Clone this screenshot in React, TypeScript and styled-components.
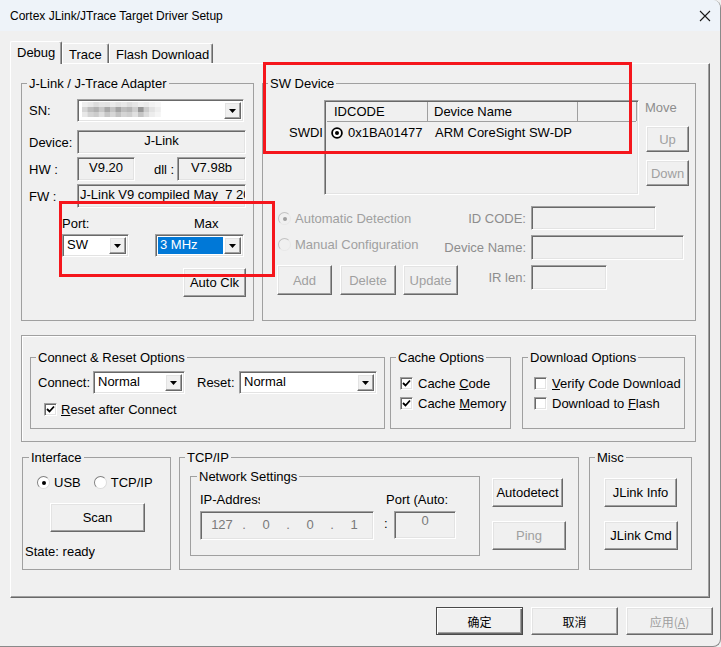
import React from "react"
import styled, { createGlobalStyle, css } from "styled-components"

const GlobalStyle = createGlobalStyle`
  * { box-sizing: border-box; }
  html, body { margin: 0; padding: 0; background: #f0f0f0; }
  body {
    font-family: "Liberation Sans", Arial, sans-serif;
    font-size: 13px;
    color: #000;
  }
`

const sunken = css`
  border: 1px solid;
  border-color: #a0a0a0 #ffffff #ffffff #a0a0a0;
  box-shadow: inset 1px 1px 0 #696969, inset -1px -1px 0 #e3e3e3;
`

const raised = css`
  border: 1px solid;
  border-color: #ffffff #696969 #696969 #ffffff;
  box-shadow: inset -1px -1px 0 #a0a0a0, inset 1px 1px 0 #e3e3e3;
`

const Window = styled.div`
  position: relative;
  width: 721px;
  height: 647px;
  background: #f0f0f0;
  border-right: 1px solid #8a8a8a;
  border-bottom: 1px solid #8a8a8a;
  border-radius: 0 8px 8px 0;
  overflow: hidden;
  display: flex;
  flex-direction: column;
`

const TitleBar = styled.div`
  height: 31px;
  flex: none;
  background: #eef3f9;
  display: flex;
  align-items: center;
  justify-content: space-between;
  padding: 0 9px 0 10px;
  font-size: 12px;
`

const Body = styled.div`
  flex: 1;
  padding: 10px 0 0 10px;
  display: flex;
  flex-direction: column;
`

const TabStrip = styled.div`
  display: flex;
  align-items: flex-end;
  height: 22px;
  position: relative;
  z-index: 1;
`

const Tab = styled.div<{ $active?: boolean; $w: number }>`
  width: ${p => p.$w}px;
  height: ${p => (p.$active ? 23 : 20)}px;
  margin-bottom: ${p => (p.$active ? -1 : 0)}px;
  background: #f0f0f0;
  border-top: 1px solid #fff;
  border-left: 1px solid #fff;
  border-right: 1px solid #696969;
  box-shadow: inset -1px 0 0 #a0a0a0;
  border-radius: 2px 2px 0 0;
  padding: 3px 0 0 6px;
  line-height: 15px;
  white-space: nowrap;
`

const Panel = styled.div`
  width: 700px;
  height: 535px;
  background: #f0f0f0;
  border-top: 1px solid #fff;
  border-left: 1px solid #fff;
  border-right: 1px solid #696969;
  border-bottom: 1px solid #696969;
  box-shadow: inset -1px -1px 0 #a0a0a0;
  padding: 12px 11px 0 10px;
  display: flex;
  flex-direction: column;
`

const Row = styled.div<{ $mt?: number; $ml?: number }>`
  display: flex;
  align-items: center;
  margin-top: ${p => p.$mt ?? 0}px;
  margin-left: ${p => p.$ml ?? 0}px;
`

const Column = styled.div<{ $mt?: number; $ml?: number; $gap?: number }>`
  display: flex;
  flex-direction: column;
  align-items: flex-start;
  margin-top: ${p => p.$mt ?? 0}px;
  margin-left: ${p => p.$ml ?? 0}px;
  gap: ${p => p.$gap ?? 0}px;
`

const Group = styled.fieldset<{ $w: number; $h: number; $ml?: number }>`
  margin: 0 0 0 ${p => p.$ml ?? 0}px;
  padding: 0;
  min-width: 0;
  width: ${p => p.$w}px;
  height: ${p => p.$h}px;
  flex: none;
  border: 1px solid #a0a0a0;
`

const Legend = styled.legend<{ $x?: number }>`
  margin-left: ${p => p.$x ?? 5}px;
  padding: 0 2px;
  line-height: 15px;
  font-size: 13px;
`

const Label = styled.span<{ $w?: number; $gray?: boolean; $right?: boolean }>`
  display: inline-block;
  flex: none;
  width: ${p => (p.$w ? `${p.$w}px` : "auto")};
  line-height: 15px;
  white-space: nowrap;
  overflow: hidden;
  color: ${p => (p.$gray ? "#8d8d8d" : "#000")};
  text-align: ${p => (p.$right ? "right" : "left")};
`

const ReadField = styled.div<{ $w: number; $h?: number; $left?: boolean }>`
  ${sunken};
  width: ${p => p.$w}px;
  height: ${p => p.$h ?? 24}px;
  flex: none;
  background: #f0f0f0;
  line-height: 20px;
  padding: ${p => (p.$left ? "0 0 0 2px" : "0 3px")};
  text-align: ${p => (p.$left ? "left" : "center")};
  white-space: nowrap;
  overflow: hidden;
`

const ComboBox = styled.div<{ $w: number }>`
  ${sunken};
  width: ${p => p.$w}px;
  height: 23px;
  flex: none;
  background: #fff;
  display: flex;
  padding: 2px;
`

const ComboText = styled.div<{ $selected?: boolean }>`
  flex: 1;
  margin-right: 1px;
  padding-left: 2px;
  line-height: 16px;
  white-space: nowrap;
  overflow: hidden;
  background: ${p => (p.$selected ? "#0078d7" : "transparent")};
  color: ${p => (p.$selected ? "#fff" : "#000")};
`

const DropButton = styled.div`
  ${raised};
  width: 17px;
  flex: none;
  background: #f0f0f0;
  display: flex;
  align-items: center;
  justify-content: center;
`

const Button = styled.button<{ $w: number; $h?: number; $off?: boolean; $default?: boolean; $cjk?: boolean }>`
  ${raised};
  width: ${p => p.$w}px;
  height: ${p => p.$h ?? 29}px;
  flex: none;
  margin: 0;
  padding: 0;
  background: #f0f0f0;
  font-family: ${p =>
    p.$cjk ? '"Noto Sans CJK SC", "Liberation Sans", sans-serif' : '"Liberation Sans", Arial, sans-serif'};
  font-size: ${p => (p.$cjk ? 12 : 13)}px;
  color: ${p => (p.$off ? "#a0a0a0" : "#000")};
  ${p =>
    p.$default &&
    css`
      border: 1px solid #4a4a4a;
      box-shadow: inset 1px 1px 0 #fff, inset -1px -1px 0 #696969, inset -2px -2px 0 #a0a0a0;
    `}
`

const CheckBox = styled.span`
  ${sunken};
  width: 13px;
  height: 13px;
  flex: none;
  background: #fff;
  display: flex;
  align-items: center;
  justify-content: center;
`

const CheckItem = styled.label<{ $gap?: number }>`
  display: flex;
  align-items: center;
  gap: ${p => p.$gap ?? 5}px;
  height: 16px;
  white-space: nowrap;
`

const RadioDot = styled.span<{ $on?: boolean; $off?: boolean }>`
  width: 13px;
  height: 13px;
  flex: none;
  border-radius: 50%;
  border: 1px solid;
  border-color: ${p => (p.$off ? "#c3c3c3 #e8e8e8 #e8e8e8 #c3c3c3" : "#808080 #dcdcdc #dcdcdc #808080")};
  background: ${p => (p.$off ? "#f0f0f0" : "#fff")};
  display: flex;
  align-items: center;
  justify-content: center;
  &::after {
    content: "";
    width: 4px;
    height: 4px;
    border-radius: 50%;
    background: ${p => (p.$off ? "#a0a0a0" : "#000")};
    display: ${p => (p.$on ? "block" : "none")};
  }
`

const RadioItem = styled.label<{ $off?: boolean }>`
  display: flex;
  align-items: center;
  gap: 4px;
  white-space: nowrap;
  color: ${p => (p.$off ? "#a0a0a0" : "#000")};
`

/* top area */

const TopRow = styled.div`
  display: flex;
  gap: 8px;
  height: 245px;
`

const AdapterBody = styled.div`
  display: flex;
  flex-direction: column;
  padding: 8px 7px 0 7px;
`

const SwBody = styled.div`
  display: flex;
  flex-direction: column;
  padding-top: 9px;
`

const SwdLabel = styled.span`
  margin: 25px 0 0 26px;
  width: 34px;
  flex: none;
  overflow: hidden;
  white-space: nowrap;
  line-height: 15px;
`

const ListView = styled.div`
  ${sunken};
  margin-left: 1px;
  width: 315px;
  height: 95px;
  flex: none;
  background: #f0f0f0;
  padding: 1px 2px 0 2px;
  overflow: hidden;
`

const ListHeader = styled.div`
  display: flex;
  height: 20px;
  border-bottom: 1px solid #a0a0a0;
`

const HeaderCell = styled.div<{ $w: number; $pl?: number }>`
  width: ${p => p.$w}px;
  flex: none;
  border-right: 1px solid #a0a0a0;
  padding-left: ${p => p.$pl ?? 6}px;
  line-height: 20px;
  white-space: nowrap;
`

const ListItem = styled.div`
  display: flex;
  align-items: center;
  height: 21px;
`

const ListCell = styled.div<{ $w: number; $pl?: number }>`
  width: ${p => p.$w}px;
  flex: none;
  display: flex;
  align-items: center;
  gap: 5px;
  padding-left: ${p => p.$pl ?? 6}px;
  white-space: nowrap;
`

const DetectGrid = styled.div`
  display: grid;
  grid-template-columns: 167px 87px auto;
  grid-template-rows: 24px 25px 30px;
  row-gap: 5px;
  margin: 11px 0 0 14px;
  align-items: start;
`

const GridLabel = styled.span`
  color: #8d8d8d;
  text-align: right;
  padding-right: 5px;
  white-space: nowrap;
  line-height: 25px;
`

const ButtonRow = styled.div<{ $gap?: number }>`
  display: flex;
  gap: ${p => p.$gap ?? 8}px;
`

/* options */

const OptionsFrame = styled.div`
  margin-top: 14px;
  width: 675px;
  height: 107px;
  flex: none;
  border: 1px solid #a0a0a0;
  box-shadow: inset 1px 1px 0 #fff;
  padding: 14px 0 0 8px;
  display: flex;
  align-items: flex-start;
`

const GroupInner = styled.div<{ $pt?: number; $pl?: number; $gap?: number }>`
  display: flex;
  flex-direction: column;
  align-items: flex-start;
  gap: ${p => p.$gap ?? 0}px;
  padding: ${p => p.$pt ?? 0}px 0 0 ${p => p.$pl ?? 0}px;
`

const BottomRow = styled.div`
  margin: 8px 0 0 1px;
  display: flex;
  align-items: flex-start;
`

const IpField = styled.div`
  ${sunken};
  width: 174px;
  height: 29px;
  flex: none;
  background: #f0f0f0;
  color: #7a7a7a;
  display: flex;
  align-items: center;
  padding: 0 0 2px 3px;
`

const Octet = styled.span<{ $w: number }>`
  width: ${p => p.$w}px;
  text-align: center;
`

const Footer = styled.div`
  display: flex;
  justify-content: flex-end;
  gap: 8px;
  margin-top: 9px;
  padding-right: 7px;
`

const Annotation = styled.div<{ $x: number; $y: number; $w: number; $h: number }>`
  position: absolute;
  left: ${p => p.$x}px;
  top: ${p => p.$y}px;
  width: ${p => p.$w}px;
  height: ${p => p.$h}px;
  border: 3px solid #f5161c;
  pointer-events: none;
`

const Arrow = () => (
  <svg width="7" height="4" viewBox="0 0 7 4">
    <path d="M0 0h7L3.5 4z" fill="#000" />
  </svg>
)

const Combo: React.FC<{ w: number; value?: React.ReactNode; selected?: boolean }> = ({ w, value, selected }) => (
  <ComboBox $w={w}>
    <ComboText $selected={selected}>{value}</ComboText>
    <DropButton>
      <Arrow />
    </DropButton>
  </ComboBox>
)

const Check: React.FC<{ on?: boolean; gap?: number; children: React.ReactNode }> = ({ on, gap, children }) => (
  <CheckItem $gap={gap}>
    <CheckBox>
      {on && (
        <svg width="9" height="9" viewBox="0 0 9 9">
          <path d="M1 4l2.5 2.5L8 1.5" stroke="#000" strokeWidth="1.8" fill="none" />
        </svg>
      )}
    </CheckBox>
    <span>{children}</span>
  </CheckItem>
)

const Radio: React.FC<{ on?: boolean; off?: boolean; children: React.ReactNode }> = ({ on, off, children }) => (
  <RadioItem $off={off}>
    <RadioDot $on={on} $off={off} />
    <span>{children}</span>
  </RadioItem>
)

const mosaic = [
  [238, 232, 220, 228, 226, 234, 226, 232, 222, 230, 238, 234, 242, 246],
  [214, 190, 178, 200, 168, 196, 164, 190, 182, 206, 150, 204, 226, 238],
  [232, 212, 204, 222, 198, 214, 194, 212, 206, 224, 196, 220, 236, 244],
]

const Blurred = () => (
  <svg width="80" height="15" viewBox="0 0 80 15">
    {mosaic.map((row, y) =>
      row.map((v, x) => (
        <rect key={`${x}-${y}`} x={x * 5.6} y={y * 5} width="6" height="5" fill={`rgb(${v},${v},${v})`} />
      ))
    )}
  </svg>
)

const ListMark = () => (
  <svg width="12" height="12" viewBox="0 0 12 12">
    <circle cx="6" cy="6" r="4.9" stroke="#000" strokeWidth="1.8" fill="#fff" />
    <circle cx="6" cy="6" r="2" fill="#000" />
  </svg>
)

export default function App() {
  return (
    <Window>
      <GlobalStyle />
      <TitleBar>
        <span>Cortex JLink/JTrace Target Driver Setup</span>
        <svg width="12" height="12" viewBox="0 0 12 12">
          <path d="M1 1l10 10M11 1L1 11" stroke="#1a1a1a" strokeWidth="1.1" />
        </svg>
      </TitleBar>

      <Body>
        <TabStrip>
          <Tab $active $w={52}>Debug</Tab>
          <Tab $w={47}>Trace</Tab>
          <Tab $w={104}>Flash Download</Tab>
        </TabStrip>

        <Panel>
          <TopRow>
            <Group $w={233} $h={245}>
              <Legend>J-Link / J-Trace Adapter</Legend>
              <AdapterBody>
                <Row>
                  <Label $w={48}>SN:</Label>
                  <ComboBox $w={167}>
                    <ComboText>
                      <Blurred />
                    </ComboText>
                    <DropButton>
                      <Arrow />
                    </DropButton>
                  </ComboBox>
                </Row>
                <Row $mt={8}>
                  <Label $w={48}>Device:</Label>
                  <ReadField $w={169}>J-Link</ReadField>
                </Row>
                <Row $mt={3}>
                  <Label $w={48}>HW :</Label>
                  <ReadField $w={58}>V9.20</ReadField>
                  <Label $w={23} style={{ marginLeft: 19 }}>dll :</Label>
                  <ReadField $w={69}>V7.98b</ReadField>
                </Row>
                <Row $mt={3}>
                  <Label $w={48}>FW :</Label>
                  <ReadField $w={169} $left>J-Link V9 compiled May&nbsp;&nbsp;7 2021 10:17:32</ReadField>
                </Row>
                <Row $mt={8} $ml={33}>
                  <Label $w={132}>Port:</Label>
                  <Label>Max</Label>
                </Row>
                <Row $mt={3} $ml={33}>
                  <Combo w={67} value="SW" />
                  <span style={{ width: 26 }} />
                  <Combo w={89} value="3 MHz" selected />
                </Row>
                <Row $mt={11} style={{ alignSelf: "flex-end" }}>
                  <Button $w={63}>Auto Clk</Button>
                </Row>
              </AdapterBody>
            </Group>

            <Group $w={434} $h={245}>
              <Legend>SW Device</Legend>
              <SwBody>
                <Row style={{ alignItems: "flex-start" }}>
                  <SwdLabel>SWDIO</SwdLabel>
                  <ListView>
                    <ListHeader>
                      <HeaderCell $w={101} $pl={7}>IDCODE</HeaderCell>
                      <HeaderCell $w={150}>Device Name</HeaderCell>
                      <HeaderCell $w={59} />
                    </ListHeader>
                    <ListItem>
                      <ListCell $w={101} $pl={4}>
                        <ListMark />
                        0x1BA01477
                      </ListCell>
                      <ListCell $w={150} $pl={7}>ARM CoreSight SW-DP</ListCell>
                    </ListItem>
                  </ListView>
                  <Column $ml={6}>
                    <Label $gray>Move</Label>
                    <Button $w={43} $h={26} $off style={{ marginTop: 11, marginLeft: 1 }}>Up</Button>
                    <Button $w={43} $h={26} $off style={{ marginTop: 8, marginLeft: 1 }}>Down</Button>
                  </Column>
                </Row>

                <DetectGrid>
                  <Row $ml={1} $mt={5}>
                    <Radio on off>Automatic Detection</Radio>
                  </Row>
                  <GridLabel>ID CODE:</GridLabel>
                  <ReadField $w={125} />

                  <Row $ml={1} $mt={2}>
                    <Radio off>Manual Configuration</Radio>
                  </Row>
                  <GridLabel>Device Name:</GridLabel>
                  <ReadField $w={153} $h={25} />

                  <ButtonRow>
                    <Button $w={55} $h={30} $off>Add</Button>
                    <Button $w={56} $h={30} $off>Delete</Button>
                    <Button $w={55} $h={30} $off style={{ marginLeft: -1 }}>Update</Button>
                  </ButtonRow>
                  <GridLabel>IR len:</GridLabel>
                  <ReadField $w={76} $h={25} />
                </DetectGrid>
              </SwBody>
            </Group>
          </TopRow>

          <OptionsFrame>
            <Group $w={355} $h={79}>
              <Legend>Connect &amp; Reset Options</Legend>
              <GroupInner $pt={6} $pl={7}>
                <Row>
                  <Label $w={55}>Connect:</Label>
                  <Combo w={92} value="Normal" />
                  <Label $w={42} style={{ marginLeft: 12 }}>Reset:</Label>
                  <Combo w={138} value="Normal" />
                </Row>
                <Row $mt={7} $ml={6}>
                  <Check on gap={4}>
                    <u>R</u>eset after Connect
                  </Check>
                </Row>
              </GroupInner>
            </Group>

            <Group $w={121} $h={79} $ml={5}>
              <Legend>Cache Options</Legend>
              <GroupInner $pt={10} $pl={9} $gap={4}>
                <Check on>
                  Cache <u>C</u>ode
                </Check>
                <Check on>
                  Cache <u>M</u>emory
                </Check>
              </GroupInner>
            </Group>

            <Group $w={163} $h={79} $ml={11}>
              <Legend>Download Options</Legend>
              <GroupInner $pt={10} $pl={11} $gap={4}>
                <Check>
                  <u>V</u>erify Code Download
                </Check>
                <Check>
                  Download to <u>F</u>lash
                </Check>
              </GroupInner>
            </Group>
          </OptionsFrame>

          <BottomRow>
            <Group $w={149} $h={120}>
              <Legend $x={6}>Interface</Legend>
              <GroupInner $pt={10} $pl={2}>
                <Row $ml={12}>
                  <Radio on>USB</Radio>
                  <span style={{ width: 13 }} />
                  <Radio>TCP/IP</Radio>
                </Row>
                <Button $w={95} style={{ marginTop: 13, marginLeft: 25 }}>Scan</Button>
                <Label style={{ marginTop: 12 }}>State: ready</Label>
              </GroupInner>
            </Group>

            <Group $w={400} $h={120} $ml={8}>
              <Legend>TCP/IP</Legend>
              <Row style={{ alignItems: "flex-start", padding: "4px 0 0 10px" }}>
                <Group $w={290} $h={87}>
                  <Legend $x={6}>Network Settings</Legend>
                  <GroupInner $pt={8} $pl={9}>
                    <Row>
                      <Label $w={60} style={{ marginRight: 126 }}>IP-Address</Label>
                      <Label>Port (Auto:</Label>
                    </Row>
                    <Row $mt={4} style={{ alignItems: "flex-start" }}>
                      <IpField>
                        <Octet $w={36}>127</Octet>
                        <Octet $w={8}>.</Octet>
                        <Octet $w={36}>0</Octet>
                        <Octet $w={8}>.</Octet>
                        <Octet $w={36}>0</Octet>
                        <Octet $w={8}>.</Octet>
                        <Octet $w={36}>1</Octet>
                      </IpField>
                      <Label $w={20} style={{ paddingLeft: 10, lineHeight: "26px" }}>:</Label>
                      <ReadField $w={62} $h={28} style={{ color: "#7a7a7a", lineHeight: "18px" }}>0</ReadField>
                    </Row>
                  </GroupInner>
                </Group>
                <Column $ml={12} $mt={9} $gap={14}>
                  <Button $w={71}>Autodetect</Button>
                  <Button $w={74} $off>Ping</Button>
                </Column>
              </Row>
            </Group>

            <Group $w={103} $h={120} $ml={10}>
              <Legend>Misc</Legend>
              <GroupInner $pt={13} $pl={14} $gap={14}>
                <Button $w={73}>JLink Info</Button>
                <Button $w={74}>JLink Cmd</Button>
              </GroupInner>
            </Group>
          </BottomRow>
        </Panel>

        <Footer>
          <Button $w={87} $h={28} $cjk $default>确定</Button>
          <Button $w={87} $h={28} $cjk>取消</Button>
          <Button $w={87} $h={28} $cjk $off>
            应用(<u>A</u>)
          </Button>
        </Footer>
      </Body>

      <Annotation $x={263} $y={62} $w={369} $h={92} />
      <Annotation $x={59} $y={201} $w={216} $h={76} />
    </Window>
  )
}
